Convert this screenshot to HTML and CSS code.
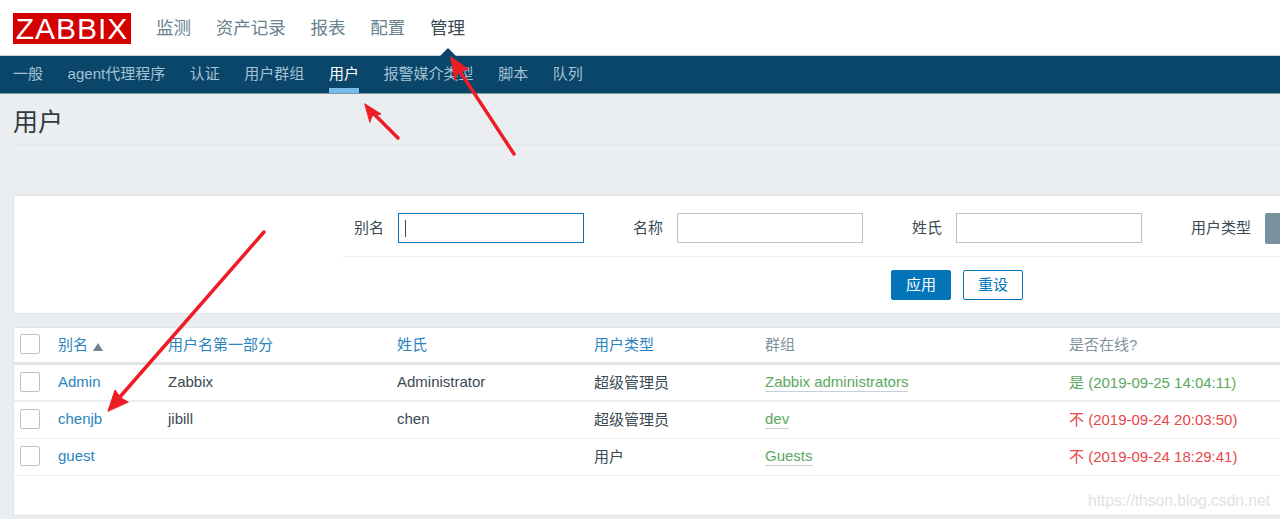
FILE: index.html
```html
<!DOCTYPE html>
<html lang="zh">
<head>
<meta charset="utf-8">
<title>用户</title>
<link rel="stylesheet" href="styles.css">
</head>
<body>
<header class="top">
  <div class="logo">ZABBIX</div>
  <nav class="mainnav">
    <a>监测</a><a>资产记录</a><a>报表</a><a>配置</a><a class="on">管理</a>
  </nav>
</header>
<nav class="subnav">
  <a>一般</a><a>agent代理程序</a><a>认证</a><a>用户群组</a><a class="on">用户</a><a>报警媒介类型</a><a>脚本</a><a>队列</a>
</nav>
<main class="page">
  <h1 class="title">用户</h1>
  <section class="filter">
    <div class="filter-row">
      <label class="fl fl1">别名</label><span class="inp focus"><i class="caret"></i></span>
      <label class="fl">名称</label><span class="inp"></span>
      <label class="fl">姓氏</label><span class="inp"></span>
      <label class="fl">用户类型</label><span class="seg"></span>
    </div>
    <div class="filter-btns">
      <button class="btn primary">应用</button><button class="btn ghost">重设</button>
    </div>
  </section>
  <section class="list">
    <div class="row head">
      <span class="cb"></span><a class="link">别名 <i class="sort"></i></a><a class="link">用户名第一部分</a><a class="link">姓氏</a><a class="link">用户类型</a><span class="muted">群组</span><span class="muted">是否在线?</span>
    </div>
    <div class="row">
      <span class="cb"></span><a class="link">Admin</a><span>Zabbix</span><span>Administrator</span><span>超级管理员</span><span><a class="grp">Zabbix administrators</a></span><span class="ok">是 (2019-09-25 14:04:11)</span>
    </div>
    <div class="row">
      <span class="cb"></span><a class="link">chenjb</a><span>jibill</span><span>chen</span><span>超级管理员</span><span><a class="grp">dev</a></span><span class="bad">不 (2019-09-24 20:03:50)</span>
    </div>
    <div class="row">
      <span class="cb"></span><a class="link">guest</a><span></span><span></span><span>用户</span><span><a class="grp">Guests</a></span><span class="bad">不 (2019-09-24 18:29:41)</span>
    </div>
  </section>
</main>
<div class="watermark">https://thson.blog.csdn.net</div>
<svg class="arrows" width="1280" height="519" viewBox="0 0 1280 519" aria-hidden="true">
  <g fill="#ee1c25" stroke="#ee1c25" stroke-linecap="round" stroke-linejoin="round">
    <line x1="514" y1="154" x2="459" y2="70" stroke-width="3.5"/>
    <path d="M451 57 L468 69 L458 73 L455 80 Z" stroke-width="1"/>
    <line x1="398" y1="138" x2="374" y2="114" stroke-width="3.5"/>
    <path d="M365 104 L381 114 L372 116 L370 122 Z" stroke-width="1"/>
    <line x1="264" y1="232" x2="119" y2="398" stroke-width="3.5"/>
    <path d="M108 411 L115 390 L121 398 L128 402 Z" stroke-width="1"/>
  </g>
</svg>
</body>
</html>
```

FILE: styles.css
```css
* { box-sizing: border-box; }
html, body { margin: 0; height: 519px; overflow: hidden; }
body {
  background: #ebeef0;
  color: #1f2c33;
  font-family: "Liberation Sans", "Noto Sans CJK SC", sans-serif;
  font-size: 15px;
  position: relative;
}
.top {
  height: 56px;
  background: #fff;
  border-bottom: 1px solid #c8d2d8;
  display: flex;
  align-items: flex-start;
  padding: 13px 0 0 13px;
}
.logo {
  width: 118px;
  height: 31px;
  background: #d40000;
  color: #fff;
  font-size: 30px;
  line-height: 31px;
  text-align: center;
  letter-spacing: 1px;
  white-space: nowrap;
}
.mainnav { display: flex; gap: 24.75px; margin-left: 25px; padding-top: 2px; }
.mainnav a { font-size: 17.5px; line-height: 26px; color: #69808d; }
.mainnav a.on { color: #3a4a53; position: relative; }
.mainnav a.on::after {
  content: "";
  position: absolute;
  left: 50%;
  margin-left: -8px;
  top: 33px;
  border: 8px solid transparent;
  border-top: 0;
  border-bottom-color: #0a466a;
}
.subnav {
  height: 38px;
  background: #0a466a;
  border-bottom: 1px solid #7d98a8;
  display: flex;
  gap: 24.6px;
  padding-left: 13px;
}
.subnav a { color: #a5c2d4; line-height: 36px; height: 37px; }
.subnav a.on { color: #fff; border-bottom: 5px solid #76bdec; }
.page { padding: 0 0 0 13px; }
.title {
  margin: 0;
  height: 51px;
  padding-top: 11px;
  font-size: 25px;
  line-height: 34px;
  font-weight: 400;
  color: #2f3b42;
  border-bottom: 1px solid #e3e7ea;
}
.filter {
  margin-top: 50px;
  height: 119px;
  background: #fff;
  border: 1px solid #dfe4e7;
  border-right: 0;
  padding-left: 329px;
}
.filter-row {
  height: 61px;
  border-bottom: 1px solid #ebeef0;
  display: flex;
  align-items: flex-start;
  padding-top: 17px;
  white-space: nowrap;
}
.fl { line-height: 30px; color: #3a4a53; margin-right: 14px; margin-left: 49px; }
.fl1 { margin-left: 11px; }
.inp {
  width: 186px;
  height: 30px;
  border: 1px solid #b6c4cf;
  background: #fff;
  flex: none;
  display: block;
  padding: 6px 0 0 6px;
}
.inp.focus { border-color: #0275b8; }
.caret { display: block; width: 1px; height: 17px; background: #3a4a53; }
.seg {
  width: 20px;
  height: 31px;
  background: #7a929e;
  border-radius: 2px 0 0 2px;
  flex: none;
}
.filter-btns { display: flex; gap: 12px; padding: 13px 0 0 548px; }
.btn {
  width: 60px;
  height: 30px;
  border-radius: 2px;
  font: inherit;
  line-height: 26px;
  padding: 0;
  border: 1px solid #0275b8;
}
.primary { background: #0275b8; color: #fff; }
.ghost { background: #fff; color: #0275b8; }
.list {
  margin-top: 13px;
  height: 189px;
  background: #fff;
  border: 1px solid #dfe4e7;
  border-right: 0;
}
.row {
  display: grid;
  grid-template-columns: 38px 110px 229px 197px 171px 304px 1fr;
  align-items: center;
  height: 37px;
  border-bottom: 1px solid #ebeef0;
  padding: 0 0 3px 6px;
  color: #3a4a53;
  white-space: nowrap;
}
.row.head { padding-bottom: 3px; border-bottom: 3px solid #dfe4e7; }
.row.head + .row { padding-bottom: 2px; border-bottom: 2px solid #ebeef0; }
.cb {
  width: 20px;
  height: 20px;
  border: 1px solid #b6c4cf;
  border-radius: 2px;
  display: block;
}
.link { color: #2c84bd; }
.muted { color: #7f929d; }
.sort {
  display: inline-block;
  border: 5px solid transparent;
  border-top: 0;
  border-bottom: 8px solid #6f8390;
  margin-left: 1px;
  vertical-align: -1px;
}
.grp { color: #5ba85f; border-bottom: 1px solid #c5d0d8; padding-bottom: 1px; }
.ok { color: #5ba85f; }
.bad { color: #e8474a; }
.watermark {
  position: absolute;
  right: 10px;
  top: 492px;
  text-align: right;
  font-size: 15.6px;
  color: #dfe2e4;
}
.arrows { position: absolute; left: 0; top: 0; pointer-events: none; }
```
